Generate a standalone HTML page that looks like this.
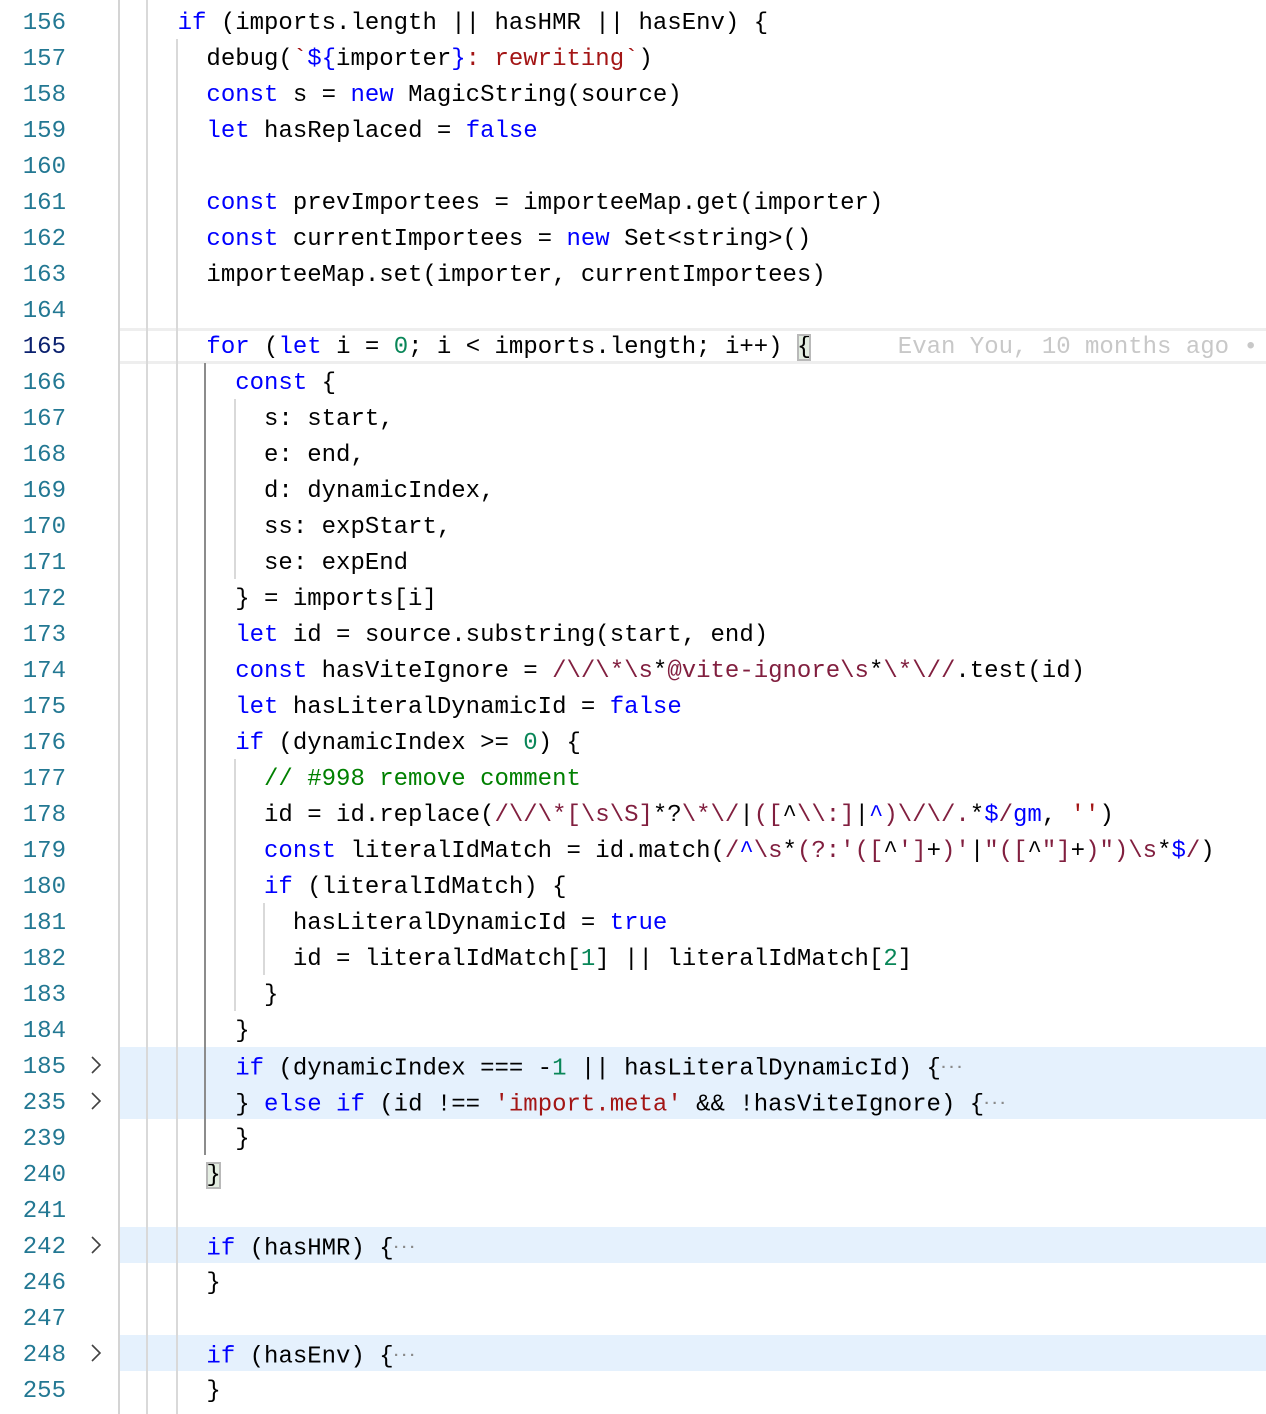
<!DOCTYPE html>
<html><head><meta charset="utf-8">
<style>
html,body{margin:0;padding:0;background:#fff;width:1266px;height:1414px;overflow:hidden;position:relative}
.ln{position:absolute;left:0;width:66px;text-align:right;font-family:"Liberation Mono",monospace;font-size:24px;line-height:36px;color:#237893;height:36px;padding-top:3px;box-sizing:border-box}
.ln.act{color:#0b216f}
.cl{position:absolute;left:120px;right:0;height:36px;font-family:"Liberation Mono",monospace;font-size:24px;line-height:36px;white-space:pre;color:#000;padding-top:3px;box-sizing:border-box}
.fold{background:#e5f1fd;padding:0}
.g{position:absolute;width:2px;background:#d9d9d9}
.k{color:#0000ff}.n{color:#098658}.s{color:#a31515}.r{color:#811f3f}.c{color:#008000}
.e{color:#8a8a8a;font-size:15px;font-weight:bold;vertical-align:middle;letter-spacing:-1px;margin-left:-2px}
.bm{background:#e4eee2;outline:2px solid #b9b9b9;outline-offset:-2px}
.arr{position:absolute;left:89px;width:14px;height:36px}
</style></head><body>
<div class="cl fold" style="top:1047px;left:119px"></div>
<div class="cl fold" style="top:1083px;left:119px"></div>
<div class="cl fold" style="top:1227px;left:119px"></div>
<div class="cl fold" style="top:1335px;left:119px"></div>
<div style="position:absolute;left:120px;right:0;top:328px;height:30px;border-top:3px solid #eee;border-bottom:3px solid #eee"></div>

<div class="g" style="left:118px;top:0;height:1414px;background:#d4d4d4"></div>
<div class="g" style="left:146px;top:0;height:1414px"></div>
<div class="g" style="left:176px;top:39px;height:1375px"></div>
<div class="g" style="left:204px;top:363px;height:792px;background:#8c8c8c"></div>
<div class="g" style="left:234px;top:399px;height:180px"></div>
<div class="g" style="left:234px;top:759px;height:252px"></div>
<div class="g" style="left:263px;top:903px;height:72px"></div>

<div class="ln" style="top:3px">156</div>
<div class="ln" style="top:39px">157</div>
<div class="ln" style="top:75px">158</div>
<div class="ln" style="top:111px">159</div>
<div class="ln" style="top:147px">160</div>
<div class="ln" style="top:183px">161</div>
<div class="ln" style="top:219px">162</div>
<div class="ln" style="top:255px">163</div>
<div class="ln" style="top:291px">164</div>
<div class="ln act" style="top:327px">165</div>
<div class="ln" style="top:363px">166</div>
<div class="ln" style="top:399px">167</div>
<div class="ln" style="top:435px">168</div>
<div class="ln" style="top:471px">169</div>
<div class="ln" style="top:507px">170</div>
<div class="ln" style="top:543px">171</div>
<div class="ln" style="top:579px">172</div>
<div class="ln" style="top:615px">173</div>
<div class="ln" style="top:651px">174</div>
<div class="ln" style="top:687px">175</div>
<div class="ln" style="top:723px">176</div>
<div class="ln" style="top:759px">177</div>
<div class="ln" style="top:795px">178</div>
<div class="ln" style="top:831px">179</div>
<div class="ln" style="top:867px">180</div>
<div class="ln" style="top:903px">181</div>
<div class="ln" style="top:939px">182</div>
<div class="ln" style="top:975px">183</div>
<div class="ln" style="top:1011px">184</div>
<div class="ln" style="top:1047px">185</div>
<div class="ln" style="top:1083px">235</div>
<div class="ln" style="top:1119px">239</div>
<div class="ln" style="top:1155px">240</div>
<div class="ln" style="top:1191px">241</div>
<div class="ln" style="top:1227px">242</div>
<div class="ln" style="top:1263px">246</div>
<div class="ln" style="top:1299px">247</div>
<div class="ln" style="top:1335px">248</div>
<div class="ln" style="top:1371px">255</div>

<svg class="arr" style="top:1047px" viewBox="0 0 14 36"><path d="M3 10 L11 18 L3 26" fill="none" stroke="#424242" stroke-width="1.6"/></svg>
<svg class="arr" style="top:1083px" viewBox="0 0 14 36"><path d="M3 10 L11 18 L3 26" fill="none" stroke="#424242" stroke-width="1.6"/></svg>
<svg class="arr" style="top:1227px" viewBox="0 0 14 36"><path d="M3 10 L11 18 L3 26" fill="none" stroke="#424242" stroke-width="1.6"/></svg>
<svg class="arr" style="top:1335px" viewBox="0 0 14 36"><path d="M3 10 L11 18 L3 26" fill="none" stroke="#424242" stroke-width="1.6"/></svg>

<div class="cl" style="top:3px">    <span class="k">if</span> (imports.length || hasHMR || hasEnv) {</div>
<div class="cl" style="top:39px">      debug(<span class="s">`</span><span class="k">${</span>importer<span class="k">}</span><span class="s">: rewriting`</span>)</div>
<div class="cl" style="top:75px">      <span class="k">const</span> s = <span class="k">new</span> MagicString(source)</div>
<div class="cl" style="top:111px">      <span class="k">let</span> hasReplaced = <span class="k">false</span></div>
<div class="cl" style="top:183px">      <span class="k">const</span> prevImportees = importeeMap.get(importer)</div>
<div class="cl" style="top:219px">      <span class="k">const</span> currentImportees = <span class="k">new</span> Set&lt;string&gt;()</div>
<div class="cl" style="top:255px">      importeeMap.set(importer, currentImportees)</div>
<div class="cl" style="top:327px">      <span class="k">for</span> (<span class="k">let</span> i = <span class="n">0</span>; i &lt; imports.length; i++) <span class="bm">{</span>      <span style="color:#c8c8c8">Evan You, 10 months ago •</span></div>
<div class="cl" style="top:363px">        <span class="k">const</span> {</div>
<div class="cl" style="top:399px">          s: start,</div>
<div class="cl" style="top:435px">          e: end,</div>
<div class="cl" style="top:471px">          d: dynamicIndex,</div>
<div class="cl" style="top:507px">          ss: expStart,</div>
<div class="cl" style="top:543px">          se: expEnd</div>
<div class="cl" style="top:579px">        } = imports[i]</div>
<div class="cl" style="top:615px">        <span class="k">let</span> id = source.substring(start, end)</div>
<div class="cl" style="top:651px">        <span class="k">const</span> hasViteIgnore = <span class="r">/\/\*\s</span>*<span class="r">@vite-ignore\s</span>*<span class="r">\*\//</span>.test(id)</div>
<div class="cl" style="top:687px">        <span class="k">let</span> hasLiteralDynamicId = <span class="k">false</span></div>
<div class="cl" style="top:723px">        <span class="k">if</span> (dynamicIndex &gt;= <span class="n">0</span>) {</div>
<div class="cl" style="top:759px">          <span class="c">// #998 remove comment</span></div>
<div class="cl" style="top:795px">          id = id.replace(<span class="r">/\/\*[\s\S]</span>*?<span class="r">\*\/</span>|<span class="r">([</span>^<span class="r">\\:]</span>|<span class="k">^</span><span class="r">)\/\/.</span>*<span class="k">$</span><span class="r">/</span><span class="k">gm</span>, <span class="s">''</span>)</div>
<div class="cl" style="top:831px">          <span class="k">const</span> literalIdMatch = id.match(<span class="r">/</span><span class="k">^</span><span class="r">\s</span>*<span class="r">(?:'([</span>^<span class="r">']</span>+<span class="r">)'</span>|<span class="r">"([</span>^<span class="r">"]</span>+<span class="r">)")\s</span>*<span class="k">$</span><span class="r">/</span>)</div>
<div class="cl" style="top:867px">          <span class="k">if</span> (literalIdMatch) {</div>
<div class="cl" style="top:903px">            hasLiteralDynamicId = <span class="k">true</span></div>
<div class="cl" style="top:939px">            id = literalIdMatch[<span class="n">1</span>] || literalIdMatch[<span class="n">2</span>]</div>
<div class="cl" style="top:975px">          }</div>
<div class="cl" style="top:1011px">        }</div>
<div class="cl" style="top:1047px">        <span class="k">if</span> (dynamicIndex === -<span class="n">1</span> || hasLiteralDynamicId) {<span class="e">···</span></div>
<div class="cl" style="top:1083px">        } <span class="k">else if</span> (id !== <span class="s">'import.meta'</span> &amp;&amp; !hasViteIgnore) {<span class="e">···</span></div>
<div class="cl" style="top:1119px">        }</div>
<div class="cl" style="top:1155px">      <span class="bm">}</span></div>
<div class="cl" style="top:1227px">      <span class="k">if</span> (hasHMR) {<span class="e">···</span></div>
<div class="cl" style="top:1263px">      }</div>
<div class="cl" style="top:1335px">      <span class="k">if</span> (hasEnv) {<span class="e">···</span></div>
<div class="cl" style="top:1371px">      }</div>
</body></html>
